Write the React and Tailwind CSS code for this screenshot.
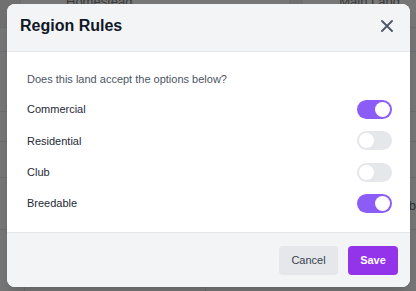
import React, { useState } from "react";

function Toggle({ on, onChange }) {
  return (
    <button
      type="button"
      onClick={onChange}
      className={
        "relative flex h-[19px] w-[35px] shrink-0 items-center rounded-full px-[2px] " +
        (on ? "justify-end bg-[#8b5cf6]" : "justify-start bg-[#e5e7eb]")
      }
    >
      <span className="block h-[15px] w-[15px] rounded-full bg-white" />
    </button>
  );
}

export default function App() {
  const [opts, setOpts] = useState({
    Commercial: true,
    Residential: false,
    Club: false,
    Breedable: true,
  });
  const font = { fontFamily: '"Liberation Sans", Arial, sans-serif' };

  return (
    <div className="relative h-[291px] w-[416px] overflow-hidden bg-[#767676]" style={font}>
      {/* dimmed page behind */}
      <div className="flex h-full flex-col">
        <div className="flex h-[28px] border-b border-[#6c6c6c]">
          <div className="w-[20px] bg-[#707070]" />
          <div className="flex w-[270px] justify-start border-x border-[#6c6c6c] pl-[45px]">
            <span className="-mt-[8px] text-[13px] text-[#3a3a3a]">Homestead</span>
          </div>
          <div className="w-[13px] bg-[#6f6f6f]" />
          <div className="flex flex-1 justify-end pr-[16px]">
            <span className="-mt-[8px] text-[13px] text-[#3a3a3a]">Main Land</span>
          </div>
        </div>
        <div className="h-[24px] border-b border-[#6c6c6c]" />
        <div className="h-[60px] border-b border-[#6c6c6c]" />
        <div className="h-[30px] border-b border-[#6c6c6c]" />
        <div className="h-[36px] border-b border-[#6c6c6c]" />
        <div className="flex h-[52px] justify-end border-b border-[#6c6c6c]">
          <span className="mt-[18px] text-[13px] text-[#2e2e2e]">b</span>
        </div>
        <div className="flex flex-1">
          <div className="w-[25px] border-r border-[#6c6c6c]" />
          <div className="w-[181px] border-r border-[#6c6c6c]" />
        </div>
      </div>

      {/* dialog */}
      <div className="absolute left-[7px] top-[4px] flex h-[283px] w-[403px] flex-col overflow-hidden rounded-lg bg-white shadow-lg">
        <div className="flex h-[48px] shrink-0 items-center justify-between border-b border-[#e5e7eb] bg-[#f3f4f6] pb-[3px] pl-[13px] pr-[17px]">
          <h2 className="text-[16px] font-bold leading-none text-[#111827]">Region Rules</h2>
          <button type="button" className="flex h-[12px] w-[12px] items-center justify-center text-[#4b5563]">
            <svg width="12" height="12" viewBox="0 0 12 12" fill="none" stroke="currentColor" strokeWidth="1.8" strokeLinecap="round">
              <path d="M1 1L11 11M11 1L1 11" />
            </svg>
          </button>
        </div>

        <div className="flex flex-1 flex-col pb-[19px] pl-[20px] pr-[18px] pt-[19px]">
          <p className="text-[11px] leading-[16px] text-[#4b5563]">Does this land accept the options below?</p>
          <div className="mt-[13px] flex flex-col gap-[12.3px]">
            {Object.keys(opts).map((k) => (
              <div key={k} className="flex h-[19px] items-center justify-between">
                <span className="text-[11px] text-[#1f2937]">{k}</span>
                <Toggle on={opts[k]} onChange={() => setOpts({ ...opts, [k]: !opts[k] })} />
              </div>
            ))}
          </div>
        </div>

        <div className="flex h-[55px] shrink-0 items-start justify-end gap-[10px] border-t border-[#e5e7eb] bg-[#f3f4f6] pr-[12px] pt-[13px]">
          <button type="button" className="h-[29px] w-[59px] rounded bg-[#e5e7eb] text-[11px] text-[#374151]">
            Cancel
          </button>
          <button type="button" className="h-[29px] w-[50px] rounded bg-[#9333ea] text-[11px] font-semibold text-white">
            Save
          </button>
        </div>
      </div>
    </div>
  );
}
